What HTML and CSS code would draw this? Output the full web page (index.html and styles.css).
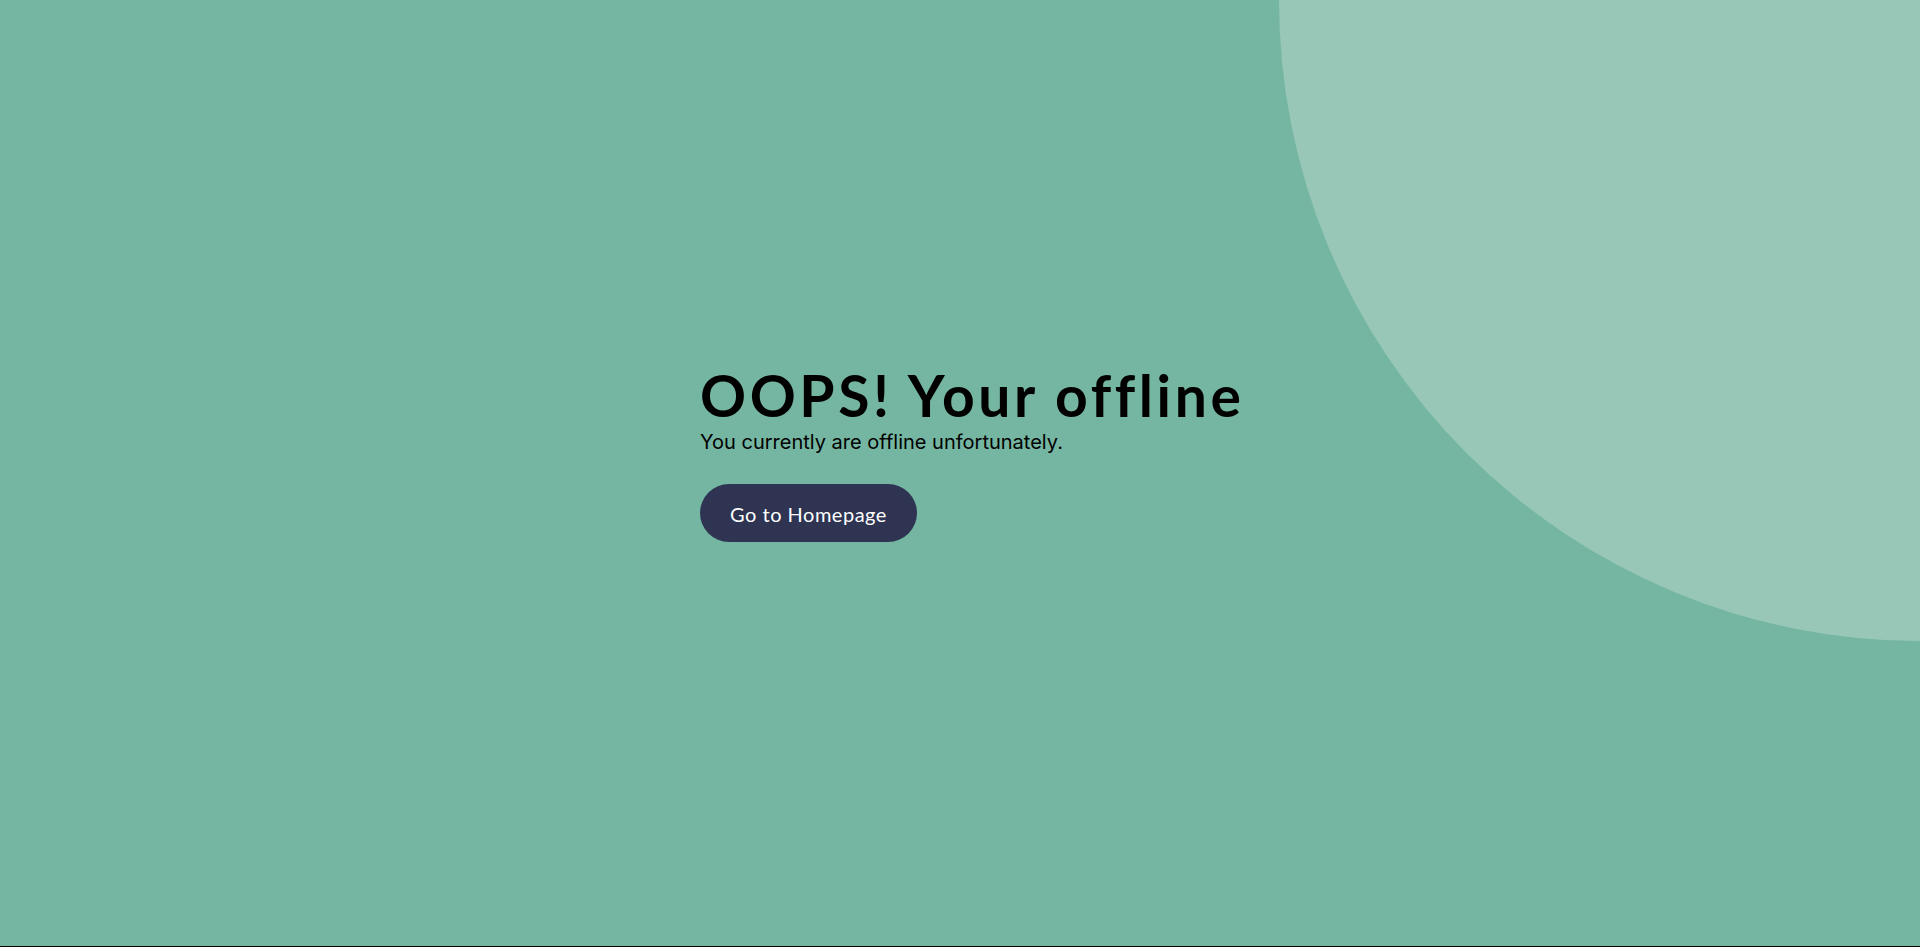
FILE: index.html
```html
<!DOCTYPE html>
<html lang="en">
<head>
<meta charset="utf-8">
<title>Offline</title>
<link rel="stylesheet" href="styles.css">
</head>
<body>
<div class="page">
  <div class="blob"></div>
  <main class="content">
    <h1 class="title">OOPS! Your offline</h1>
    <p class="subtitle">You currently are offline unfortunately.</p>
    <a class="btn" href="#">Go to Homepage</a>
  </main>
</div>
</body>
</html>
```
FILE: styles.css
```css
html {
  background: #000;
}
body {
  margin: 0;
}
.page {
  position: relative;
  overflow: hidden;
  height: calc(100vh - 1px);
  background: #75b6a2;
  display: flex;
  align-items: center;
  justify-content: center;
  padding-bottom: 40px;
  box-sizing: border-box;
}
.blob {
  position: absolute;
  top: -641px;
  right: -641px;
  width: 1282px;
  height: 1282px;
  border-radius: 50%;
  background: #98c7b8;
}
.content {
  position: relative;
  width: 520px;
  display: flex;
  flex-direction: column;
  align-items: flex-start;
}
.title {
  margin: 0;
  font-family: Lato, "Noto Sans", sans-serif;
  font-weight: 700;
  font-size: 57px;
  line-height: 60px;
  letter-spacing: 3.6px;
  white-space: nowrap;
  color: #000;
}
.subtitle {
  margin: 5px 0 0;
  font-family: Inter, "Noto Sans", sans-serif;
  font-size: 20px;
  line-height: 24px;
  color: #000;
}
.btn {
  margin-top: 30px;
  display: inline-flex;
  align-items: center;
  justify-content: center;
  width: 217px;
  height: 58px;
  border-radius: 29px;
  background: #2e3452;
  color: #fff;
  text-decoration: none;
  font-family: Lato, "Noto Sans", sans-serif;
  font-size: 20px;
  letter-spacing: 0.5px;
  padding-top: 2px;
  box-sizing: border-box;
}
```
